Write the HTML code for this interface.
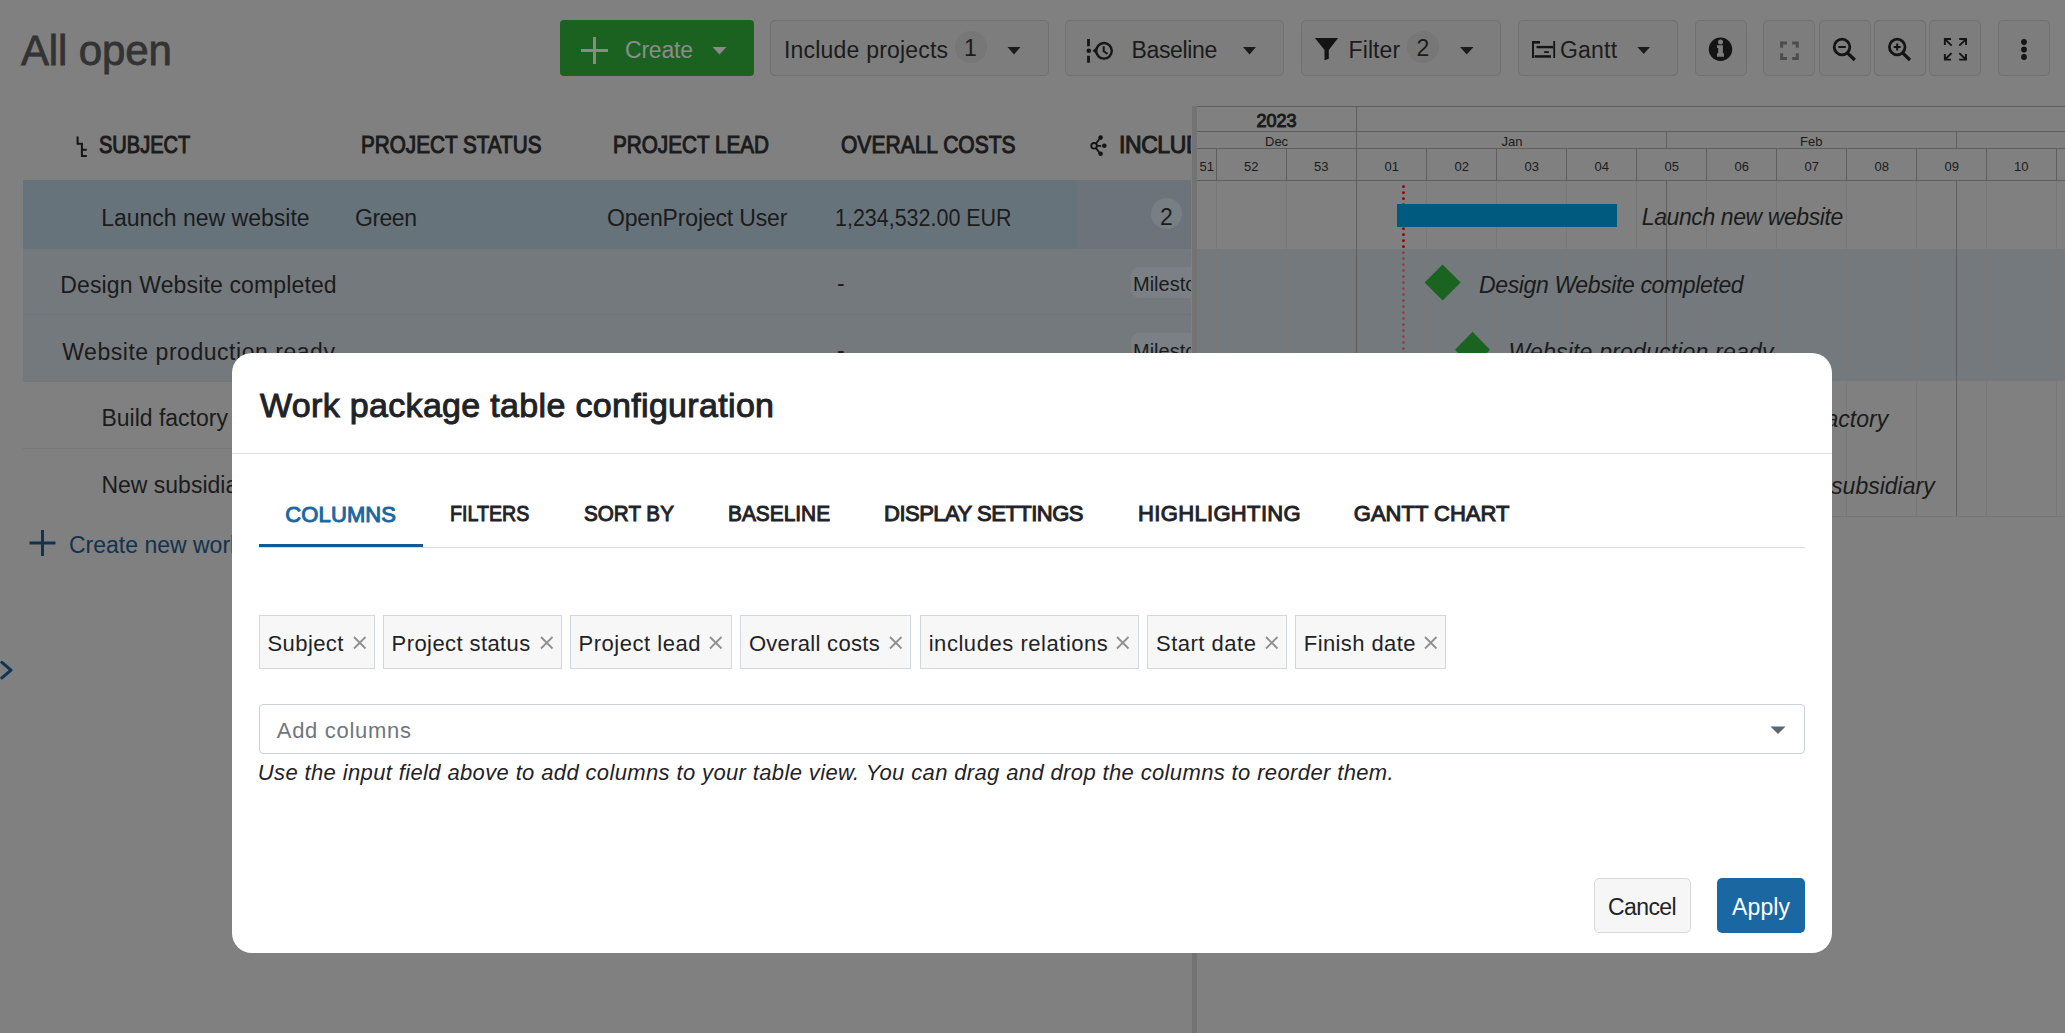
<!DOCTYPE html><html><head><meta charset="utf-8"><style>html,body{margin:0;padding:0}body{width:2065px;height:1033px;position:relative;overflow:hidden;background:#808080;font-family:"Liberation Sans",sans-serif}.t{position:absolute;white-space:nowrap;transform-origin:0 0}</style></head><body>
<div style="position:absolute;left:560px;top:20px;width:194px;height:56px;background:#1b6221;border-radius:4px"></div>
<svg style="position:absolute;left:560px;top:20px" width="194" height="56" viewBox="0 0 194 56"><path d="M34.5 17v27M21 30.5h27" stroke="#8a8a8a" stroke-width="3"/><path d="M152.5 27h14l-7 7.5z" fill="#8a8a8a"/></svg>
<div style="position:absolute;left:770px;top:20px;width:279px;height:56px;background:#7d7d7d;border:1px solid #717171;border-radius:5px;box-sizing:border-box"></div>
<div style="position:absolute;left:955px;top:30.5px;width:32px;height:32px;border-radius:50%;background:#777"></div>
<svg style="position:absolute;left:770px;top:20px" width="279" height="56" viewBox="0 0 279 56"><path d="M237.5 27h13l-6.5 7.5z" fill="#1b1b1b"/></svg>
<div style="position:absolute;left:1065px;top:20px;width:219px;height:56px;background:#7d7d7d;border:1px solid #717171;border-radius:5px;box-sizing:border-box"></div>
<svg style="position:absolute;left:1065px;top:20px" width="219" height="56" viewBox="0 0 219 56"><path d="M23.5 19v7.3M23.5 35.7v7" stroke="#161616" stroke-width="2.8"/><circle cx="23.8" cy="30.8" r="2.3" fill="#161616"/><circle cx="39" cy="30.8" r="7.8" fill="none" stroke="#161616" stroke-width="2.4"/><path d="M27.5 30.8l4.5-4v8z" fill="#161616"/><path d="M38.7 26.3v5l3.8 2.5" fill="none" stroke="#161616" stroke-width="2"/><path d="M178 27h13l-6.5 7.5z" fill="#1b1b1b"/></svg>
<div style="position:absolute;left:1301px;top:20px;width:200px;height:56px;background:#7d7d7d;border:1px solid #717171;border-radius:5px;box-sizing:border-box"></div>
<div style="position:absolute;left:1407px;top:30.5px;width:32px;height:32px;border-radius:50%;background:#777"></div>
<svg style="position:absolute;left:1301px;top:20px" width="200" height="56" viewBox="0 0 200 56"><path d="M13.9 18H37.1L27.8 29.9V38.7L23.5 40.3V29.9Z" fill="#141414"/><path d="M159 27h13.5l-6.75 7.5z" fill="#1b1b1b"/></svg>
<div style="position:absolute;left:1518px;top:20px;width:160px;height:56px;background:#7d7d7d;border:1px solid #717171;border-radius:5px;box-sizing:border-box"></div>
<svg style="position:absolute;left:1518px;top:20px" width="160" height="56" viewBox="0 0 160 56"><g fill="#141414"><rect x="14" y="21" width="2" height="17"/><rect x="16" y="21" width="6" height="2.6"/><rect x="18.5" y="25.9" width="16.5" height="2.4"/><rect x="26.2" y="31.2" width="4.6" height="1.8"/><rect x="16.6" y="35.2" width="16.4" height="2.5"/><rect x="35.3" y="21" width="1.8" height="17"/></g><path d="M119.4 27h12.6l-6.3 7z" fill="#1b1b1b"/></svg>
<div style="position:absolute;left:1695px;top:20px;width:52px;height:56px;background:#7d7d7d;border:1px solid #717171;border-radius:5px;box-sizing:border-box"></div>
<svg style="position:absolute;left:1695px;top:20px" width="52" height="56" viewBox="0 0 52 56"><circle cx="25.5" cy="29.3" r="11.7" fill="#141414"/><circle cx="25.5" cy="22" r="2.5" fill="#7d7d7d"/><path d="M22 25.3H27.9V33.3H29V36.7H22V33.3H23.2V28H22Z" fill="#7d7d7d"/></svg>
<div style="position:absolute;left:1763px;top:20px;width:52px;height:56px;background:#7d7d7d;border:1px solid #717171;border-radius:5px;box-sizing:border-box"></div>
<div style="position:absolute;left:1819px;top:20px;width:52px;height:56px;background:#7d7d7d;border:1px solid #717171;border-radius:5px;box-sizing:border-box"></div>
<div style="position:absolute;left:1874px;top:20px;width:52px;height:56px;background:#7d7d7d;border:1px solid #717171;border-radius:5px;box-sizing:border-box"></div>
<div style="position:absolute;left:1929px;top:20px;width:52px;height:56px;background:#7d7d7d;border:1px solid #717171;border-radius:5px;box-sizing:border-box"></div>
<div style="position:absolute;left:1998px;top:20px;width:52px;height:56px;background:#7d7d7d;border:1px solid #717171;border-radius:5px;box-sizing:border-box"></div>
<svg style="position:absolute;left:1763px;top:20px" width="52" height="56" viewBox="0 0 52 56"><path d="M18.6 27.7V22.9H23.9M29.2 22.9H34.3V27.7M34.3 33.2V38.5H29.2M23.9 38.5H18.6V33.2" fill="none" stroke="#4d4d4d" stroke-width="3"/></svg>
<svg style="position:absolute;left:1819px;top:20px" width="52" height="56" viewBox="0 0 52 56"><circle cx="23" cy="27" r="7.8" fill="none" stroke="#141414" stroke-width="2.8"/><path d="M19.3 27h7.5" stroke="#141414" stroke-width="2"/><path d="M28.5 33l7.3 7" stroke="#141414" stroke-width="3.2"/></svg>
<svg style="position:absolute;left:1874px;top:20px" width="52" height="56" viewBox="0 0 52 56"><circle cx="23.2" cy="27" r="7.8" fill="none" stroke="#141414" stroke-width="2.8"/><path d="M19.7 27h7M23.2 23.5v7" stroke="#141414" stroke-width="2"/><path d="M28.7 33l7.3 7" stroke="#141414" stroke-width="3.2"/></svg>
<svg style="position:absolute;left:1929px;top:20px" width="52" height="56" viewBox="0 0 52 56"><g fill="none" stroke="#141414" stroke-width="1.9"><path d="M15.85 24.9V19.05H22M16.2 19.4l6.4 6.2"/><path d="M30.2 19.05H37.05V24.9M36.7 19.4l-6.4 6.2"/><path d="M15.85 34V39.65H22M16.2 39.3l6.4-6.2"/><path d="M30.2 39.65H37.05V34M36.7 39.3l-6.4-6.2"/></g></svg>
<svg style="position:absolute;left:1998px;top:20px" width="52" height="56" viewBox="0 0 52 56"><g fill="#141414"><circle cx="26" cy="22" r="2.9"/><circle cx="26" cy="29.5" r="2.9"/><circle cx="26" cy="37" r="2.9"/></g></svg>
<svg style="position:absolute;left:70px;top:130px" width="25" height="32" viewBox="0 0 25 32"><path d="M7.6 6.5v7.3h4.3V26h4.9M11.9 19.8h4.9" fill="none" stroke="#141414" stroke-width="2"/></svg>
<svg style="position:absolute;left:1085px;top:130px" width="30" height="32" viewBox="0 0 30 32"><circle cx="9.1" cy="15.8" r="2.8" fill="none" stroke="#141414" stroke-width="1.9"/><path d="M11 13.5l3.3-4.4M12 15.8h4.2M11 18.1l3.3 4.4" stroke="#141414" stroke-width="1.8"/><g fill="#141414"><circle cx="15.6" cy="7.6" r="2.3"/><circle cx="19.3" cy="15.8" r="2.3"/><circle cx="15.6" cy="23.8" r="2.3"/></g></svg>
<div style="position:absolute;left:23px;top:180px;width:1054px;height:69px;background:#67737b"></div>
<div style="position:absolute;left:1077px;top:180px;width:114px;height:69px;background:#6d737b"></div>
<div style="position:absolute;left:23px;top:249px;width:1168px;height:132px;background:#74797d"></div>
<div style="position:absolute;left:23px;top:314px;width:1168px;height:1px;background:#6e757a"></div>
<div style="position:absolute;left:23px;top:381px;width:1168px;height:1px;background:#767676"></div>
<div style="position:absolute;left:23px;top:448px;width:1168px;height:1px;background:#777"></div>
<div style="position:absolute;left:1150.5px;top:197.5px;width:31.5px;height:31.5px;border-radius:50%;background:#787f84"></div>
<div style="position:absolute;left:1131px;top:266.5px;width:60px;height:31px;overflow:hidden"><div style="width:120px;height:31px;border-radius:8px;background:#7a8085"></div></div>
<div style="position:absolute;left:1131px;top:333px;width:60px;height:31px;overflow:hidden"><div style="width:120px;height:31px;border-radius:8px;background:#7a8085"></div></div>
<svg style="position:absolute;left:26px;top:527px" width="34" height="34" viewBox="0 0 34 34"><path d="M16.5 3v26M3.5 16h26" stroke="#12324d" stroke-width="3"/></svg>
<svg style="position:absolute;left:0px;top:655px" width="16" height="30" viewBox="0 0 16 30"><path d="M1.9 7.4L11 15.1L1.9 22.9" fill="none" stroke="#0f3456" stroke-width="3.1" stroke-linecap="round" stroke-linejoin="round"/></svg>
<div style="position:absolute;left:1192px;top:106px;width:5px;height:927px;background:#737373"></div>
<svg style="position:absolute;left:1197px;top:106px" width="868" height="420" viewBox="0 0 868 420"><rect x="0" y="0" width="868" height="1" fill="#5f5f5f"/><rect x="0" y="25" width="868" height="1" fill="#5f5f5f"/><rect x="0" y="42" width="868" height="1" fill="#5f5f5f"/><rect x="0" y="74" width="868" height="1" fill="#5f5f5f"/><rect x="0" y="410" width="868" height="1" fill="#777"/><rect x="0" y="143" width="868" height="132" fill="#74797d"/><rect x="19" y="42" width="1" height="32" fill="#5f5f5f"/><rect x="19" y="75" width="1" height="335" fill="#787878"/><rect x="89" y="42" width="1" height="32" fill="#5f5f5f"/><rect x="89" y="75" width="1" height="335" fill="#787878"/><rect x="229" y="42" width="1" height="32" fill="#5f5f5f"/><rect x="229" y="75" width="1" height="335" fill="#787878"/><rect x="299" y="42" width="1" height="32" fill="#5f5f5f"/><rect x="299" y="75" width="1" height="335" fill="#787878"/><rect x="369" y="42" width="1" height="32" fill="#5f5f5f"/><rect x="369" y="75" width="1" height="335" fill="#787878"/><rect x="439" y="42" width="1" height="32" fill="#5f5f5f"/><rect x="439" y="75" width="1" height="335" fill="#787878"/><rect x="509" y="42" width="1" height="32" fill="#5f5f5f"/><rect x="509" y="75" width="1" height="335" fill="#787878"/><rect x="579" y="42" width="1" height="32" fill="#5f5f5f"/><rect x="579" y="75" width="1" height="335" fill="#787878"/><rect x="649" y="42" width="1" height="32" fill="#5f5f5f"/><rect x="649" y="75" width="1" height="335" fill="#787878"/><rect x="719" y="42" width="1" height="32" fill="#5f5f5f"/><rect x="719" y="75" width="1" height="335" fill="#787878"/><rect x="789" y="42" width="1" height="32" fill="#5f5f5f"/><rect x="789" y="75" width="1" height="335" fill="#787878"/><rect x="859" y="42" width="1" height="32" fill="#5f5f5f"/><rect x="859" y="75" width="1" height="335" fill="#787878"/><rect x="159" y="0" width="1" height="411" fill="#5f5f5f"/><rect x="469" y="25" width="1" height="17" fill="#5f5f5f"/><rect x="469" y="75" width="1" height="335" fill="#5f5f5f"/><rect x="759" y="25" width="1" height="17" fill="#5f5f5f"/><rect x="759" y="75" width="1" height="335" fill="#5f5f5f"/><circle cx="206.5" cy="80.7" r="1.4" fill="#900000"/><circle cx="206.5" cy="86.7" r="1.4" fill="#900000"/><circle cx="206.5" cy="92.7" r="1.4" fill="#900000"/><circle cx="206.5" cy="98.7" r="1.4" fill="#900000"/><circle cx="206.5" cy="104.7" r="1.4" fill="#900000"/><circle cx="206.5" cy="110.7" r="1.4" fill="#900000"/><circle cx="206.5" cy="116.7" r="1.4" fill="#900000"/><circle cx="206.5" cy="122.7" r="1.4" fill="#900000"/><circle cx="206.5" cy="128.7" r="1.4" fill="#900000"/><circle cx="206.5" cy="134.7" r="1.4" fill="#900000"/><circle cx="206.5" cy="140.7" r="1.4" fill="#900000"/><circle cx="206.5" cy="146.7" r="1.4" fill="#8a4448"/><circle cx="206.5" cy="152.7" r="1.4" fill="#8a4448"/><circle cx="206.5" cy="158.7" r="1.4" fill="#8a4448"/><circle cx="206.5" cy="164.7" r="1.4" fill="#8a4448"/><circle cx="206.5" cy="170.7" r="1.4" fill="#8a4448"/><circle cx="206.5" cy="176.7" r="1.4" fill="#8a4448"/><circle cx="206.5" cy="182.7" r="1.4" fill="#8a4448"/><circle cx="206.5" cy="188.7" r="1.4" fill="#8a4448"/><circle cx="206.5" cy="194.7" r="1.4" fill="#8a4448"/><circle cx="206.5" cy="200.7" r="1.4" fill="#8a4448"/><circle cx="206.5" cy="206.7" r="1.4" fill="#8a4448"/><circle cx="206.5" cy="212.7" r="1.4" fill="#8a4448"/><circle cx="206.5" cy="218.7" r="1.4" fill="#8a4448"/><circle cx="206.5" cy="224.7" r="1.4" fill="#8a4448"/><circle cx="206.5" cy="230.7" r="1.4" fill="#8a4448"/><circle cx="206.5" cy="236.7" r="1.4" fill="#8a4448"/><circle cx="206.5" cy="242.7" r="1.4" fill="#8a4448"/><circle cx="206.5" cy="248.7" r="1.4" fill="#8a4448"/><rect x="200" y="98" width="220" height="23" fill="#005a80"/><path d="M245.5999999999999 158.5l18 18-18 18-18-18z" fill="#1b6320"/><path d="M275.5 225.7l17.5 18-17.5 18-17.5-18z" fill="#1b6320"/></svg>
<div class="t" style="left:21.00px;top:29.70px;font:normal 400 42px/42px 'Liberation Sans', sans-serif;-webkit-text-stroke:0.8px #333333;letter-spacing:-0.143px;color:#333333">All open</div>
<div class="t" style="left:625.00px;top:39.20px;font:normal 400 23px/23px 'Liberation Sans', sans-serif;letter-spacing:-0.200px;color:#8c8c8c">Create</div>
<div class="t" style="left:784.00px;top:38.70px;font:normal 400 23px/23px 'Liberation Sans', sans-serif;letter-spacing:0.200px;color:#1b1b1b">Include projects</div>
<div class="t" style="left:964.00px;top:37.00px;font:normal 400 23px/23px 'Liberation Sans', sans-serif;letter-spacing:0.000px;color:#1b1b1b">1</div>
<div class="t" style="left:1131.50px;top:38.70px;font:normal 400 23px/23px 'Liberation Sans', sans-serif;letter-spacing:-0.357px;color:#1b1b1b">Baseline</div>
<div class="t" style="left:1348.60px;top:38.70px;font:normal 400 23px/23px 'Liberation Sans', sans-serif;letter-spacing:0.080px;color:#1b1b1b">Filter</div>
<div class="t" style="left:1416.50px;top:37.20px;font:normal 400 23px/23px 'Liberation Sans', sans-serif;letter-spacing:0.000px;color:#1b1b1b">2</div>
<div class="t" style="left:1560.00px;top:38.70px;font:normal 400 23px/23px 'Liberation Sans', sans-serif;letter-spacing:0.200px;color:#1b1b1b">Gantt</div>
<div class="t" style="left:99.43px;top:133.90px;font:normal 400 23px/23px 'Liberation Sans', sans-serif;-webkit-text-stroke:1.0px #1b1b1b;letter-spacing:0.000px;color:#1b1b1b;transform:scaleX(0.8702)">SUBJECT</div>
<div class="t" style="left:361.10px;top:133.90px;font:normal 400 23px/23px 'Liberation Sans', sans-serif;-webkit-text-stroke:1.0px #1b1b1b;letter-spacing:0.000px;color:#1b1b1b;transform:scaleX(0.8995)">PROJECT STATUS</div>
<div class="t" style="left:613.30px;top:133.90px;font:normal 400 23px/23px 'Liberation Sans', sans-serif;-webkit-text-stroke:1.0px #1b1b1b;letter-spacing:0.000px;color:#1b1b1b;transform:scaleX(0.9000)">PROJECT LEAD</div>
<div class="t" style="left:840.99px;top:133.90px;font:normal 400 23px/23px 'Liberation Sans', sans-serif;-webkit-text-stroke:1.0px #1b1b1b;letter-spacing:0.000px;color:#1b1b1b;transform:scaleX(0.9148)">OVERALL COSTS</div>
<div class="t" style="left:1119.00px;top:133.90px;width:72.00px;overflow:hidden;font:normal 400 23px/23px 'Liberation Sans', sans-serif;-webkit-text-stroke:1.0px #1b1b1b;letter-spacing:-0.412px;color:#1b1b1b">INCLUDES RELATIONS</div>
<div class="t" style="left:101.20px;top:207.00px;font:normal 400 23px/23px 'Liberation Sans', sans-serif;letter-spacing:0.000px;color:#1b1b1b">Launch new website</div>
<div class="t" style="left:355.00px;top:207.00px;font:normal 400 23px/23px 'Liberation Sans', sans-serif;letter-spacing:-0.500px;color:#1b1b1b">Green</div>
<div class="t" style="left:607.00px;top:207.00px;font:normal 400 23px/23px 'Liberation Sans', sans-serif;letter-spacing:-0.160px;color:#1b1b1b">OpenProject User</div>
<div class="t" style="left:835.13px;top:207.00px;font:normal 400 23px/23px 'Liberation Sans', sans-serif;letter-spacing:0.000px;color:#1b1b1b;transform:scaleX(0.9333)">1,234,532.00 EUR</div>
<div class="t" style="left:1160.00px;top:206.00px;font:normal 400 23px/23px 'Liberation Sans', sans-serif;letter-spacing:0.000px;color:#1b1b1b">2</div>
<div class="t" style="left:60.30px;top:273.70px;font:normal 400 23px/23px 'Liberation Sans', sans-serif;letter-spacing:0.139px;color:#1b1b1b">Design Website completed</div>
<div class="t" style="left:837.00px;top:271.70px;font:normal 400 23px/23px 'Liberation Sans', sans-serif;letter-spacing:0.000px;color:#1b1b1b">-</div>
<div class="t" style="left:1133.00px;top:273.50px;width:58.00px;overflow:hidden;font:normal 400 20px/20px 'Liberation Sans', sans-serif;letter-spacing:0.000px;color:#1b1b1b">Milestone</div>
<div class="t" style="left:62.30px;top:340.50px;font:normal 400 23px/23px 'Liberation Sans', sans-serif;letter-spacing:0.530px;color:#1b1b1b">Website production ready</div>
<div class="t" style="left:837.00px;top:338.50px;font:normal 400 23px/23px 'Liberation Sans', sans-serif;letter-spacing:0.000px;color:#1b1b1b">-</div>
<div class="t" style="left:1133.00px;top:340.50px;width:58.00px;overflow:hidden;font:normal 400 20px/20px 'Liberation Sans', sans-serif;letter-spacing:0.000px;color:#1b1b1b">Milestone</div>
<div class="t" style="left:101.40px;top:407.20px;font:normal 400 23px/23px 'Liberation Sans', sans-serif;letter-spacing:0.000px;color:#1b1b1b">Build factory</div>
<div class="t" style="left:101.40px;top:474.00px;font:normal 400 23px/23px 'Liberation Sans', sans-serif;letter-spacing:0.000px;color:#1b1b1b">New subsidiary</div>
<div class="t" style="left:69.00px;top:534.00px;font:normal 400 23px/23px 'Liberation Sans', sans-serif;letter-spacing:0.000px;color:#12324d">Create new work package</div>
<div class="t" style="left:1256.50px;top:112.00px;font:normal 400 18px/18px 'Liberation Sans', sans-serif;-webkit-text-stroke:1.0px #1b1b1b;letter-spacing:0.000px;color:#1b1b1b">2023</div>
<div class="t" style="left:1265.00px;top:135.00px;font:normal 400 13px/13px 'Liberation Sans', sans-serif;letter-spacing:0.000px;color:#1b1b1b">Dec</div>
<div class="t" style="left:1501.50px;top:135.00px;font:normal 400 13px/13px 'Liberation Sans', sans-serif;letter-spacing:0.000px;color:#1b1b1b">Jan</div>
<div class="t" style="left:1800.00px;top:135.00px;font:normal 400 13px/13px 'Liberation Sans', sans-serif;letter-spacing:0.000px;color:#1b1b1b">Feb</div>
<div class="t" style="left:1199.50px;top:160.20px;font:normal 400 13px/13px 'Liberation Sans', sans-serif;letter-spacing:0.000px;color:#1b1b1b">51</div>
<div class="t" style="left:1244.00px;top:160.20px;font:normal 400 13px/13px 'Liberation Sans', sans-serif;letter-spacing:0.000px;color:#1b1b1b">52</div>
<div class="t" style="left:1314.00px;top:160.20px;font:normal 400 13px/13px 'Liberation Sans', sans-serif;letter-spacing:0.000px;color:#1b1b1b">53</div>
<div class="t" style="left:1384.50px;top:160.20px;font:normal 400 13px/13px 'Liberation Sans', sans-serif;letter-spacing:0.000px;color:#1b1b1b">01</div>
<div class="t" style="left:1454.50px;top:160.20px;font:normal 400 13px/13px 'Liberation Sans', sans-serif;letter-spacing:0.000px;color:#1b1b1b">02</div>
<div class="t" style="left:1524.50px;top:160.20px;font:normal 400 13px/13px 'Liberation Sans', sans-serif;letter-spacing:0.000px;color:#1b1b1b">03</div>
<div class="t" style="left:1594.50px;top:160.20px;font:normal 400 13px/13px 'Liberation Sans', sans-serif;letter-spacing:0.000px;color:#1b1b1b">04</div>
<div class="t" style="left:1664.50px;top:160.20px;font:normal 400 13px/13px 'Liberation Sans', sans-serif;letter-spacing:0.000px;color:#1b1b1b">05</div>
<div class="t" style="left:1734.50px;top:160.20px;font:normal 400 13px/13px 'Liberation Sans', sans-serif;letter-spacing:0.000px;color:#1b1b1b">06</div>
<div class="t" style="left:1804.50px;top:160.20px;font:normal 400 13px/13px 'Liberation Sans', sans-serif;letter-spacing:0.000px;color:#1b1b1b">07</div>
<div class="t" style="left:1874.50px;top:160.20px;font:normal 400 13px/13px 'Liberation Sans', sans-serif;letter-spacing:0.000px;color:#1b1b1b">08</div>
<div class="t" style="left:1944.50px;top:160.20px;font:normal 400 13px/13px 'Liberation Sans', sans-serif;letter-spacing:0.000px;color:#1b1b1b">09</div>
<div class="t" style="left:2014.00px;top:160.20px;font:normal 400 13px/13px 'Liberation Sans', sans-serif;letter-spacing:0.000px;color:#1b1b1b">10</div>
<div class="t" style="left:1641.80px;top:206.00px;font:italic 400 23px/23px 'Liberation Sans', sans-serif;letter-spacing:-0.412px;color:#1b1b1b">Launch new website</div>
<div class="t" style="left:1479.00px;top:273.60px;font:italic 400 23px/23px 'Liberation Sans', sans-serif;letter-spacing:-0.370px;color:#1b1b1b">Design Website completed</div>
<div class="t" style="left:1508.50px;top:340.50px;font:italic 400 23px/23px 'Liberation Sans', sans-serif;letter-spacing:0.196px;color:#1b1b1b">Website production ready</div>
<div class="t" style="left:1761.60px;top:407.70px;font:italic 400 23px/23px 'Liberation Sans', sans-serif;letter-spacing:0.000px;color:#1b1b1b">Build factory</div>
<div class="t" style="left:1778.70px;top:474.70px;font:italic 400 23px/23px 'Liberation Sans', sans-serif;letter-spacing:0.000px;color:#1b1b1b">New subsidiary</div>
<div style="position:absolute;left:232px;top:353px;width:1600px;height:600px;background:#fff;border-radius:20px"></div>
<div style="position:absolute;left:232px;top:453px;width:1600px;height:1px;background:#dfe3e7"></div>
<div style="position:absolute;left:259px;top:547px;width:1546px;height:1px;background:#d5dce3"></div>
<div style="position:absolute;left:259px;top:544px;width:164px;height:3px;background:#135a96"></div>
<div style="position:absolute;left:259px;top:615px;width:116px;height:54px;box-sizing:border-box;background:#f7f7f7;border:1px solid #d0d7de"></div>
<svg style="position:absolute;left:352.5px;top:636px" width="14" height="14" viewBox="0 0 14 14"><path d="M1 1l11.5 11.5M12.5 1L1 12.5" stroke="#8f8f8f" stroke-width="1.8"/></svg>
<div style="position:absolute;left:383px;top:615px;width:179px;height:54px;box-sizing:border-box;background:#f7f7f7;border:1px solid #d0d7de"></div>
<svg style="position:absolute;left:539.5px;top:636px" width="14" height="14" viewBox="0 0 14 14"><path d="M1 1l11.5 11.5M12.5 1L1 12.5" stroke="#8f8f8f" stroke-width="1.8"/></svg>
<div style="position:absolute;left:570px;top:615px;width:162px;height:54px;box-sizing:border-box;background:#f7f7f7;border:1px solid #d0d7de"></div>
<svg style="position:absolute;left:708.7px;top:636px" width="14" height="14" viewBox="0 0 14 14"><path d="M1 1l11.5 11.5M12.5 1L1 12.5" stroke="#8f8f8f" stroke-width="1.8"/></svg>
<div style="position:absolute;left:740px;top:615px;width:171px;height:54px;box-sizing:border-box;background:#f7f7f7;border:1px solid #d0d7de"></div>
<svg style="position:absolute;left:888.6px;top:636px" width="14" height="14" viewBox="0 0 14 14"><path d="M1 1l11.5 11.5M12.5 1L1 12.5" stroke="#8f8f8f" stroke-width="1.8"/></svg>
<div style="position:absolute;left:920px;top:615px;width:219px;height:54px;box-sizing:border-box;background:#f7f7f7;border:1px solid #d0d7de"></div>
<svg style="position:absolute;left:1115.8px;top:636px" width="14" height="14" viewBox="0 0 14 14"><path d="M1 1l11.5 11.5M12.5 1L1 12.5" stroke="#8f8f8f" stroke-width="1.8"/></svg>
<div style="position:absolute;left:1147px;top:615px;width:140px;height:54px;box-sizing:border-box;background:#f7f7f7;border:1px solid #d0d7de"></div>
<svg style="position:absolute;left:1264.7px;top:636px" width="14" height="14" viewBox="0 0 14 14"><path d="M1 1l11.5 11.5M12.5 1L1 12.5" stroke="#8f8f8f" stroke-width="1.8"/></svg>
<div style="position:absolute;left:1295px;top:615px;width:151px;height:54px;box-sizing:border-box;background:#f7f7f7;border:1px solid #d0d7de"></div>
<svg style="position:absolute;left:1424.0px;top:636px" width="14" height="14" viewBox="0 0 14 14"><path d="M1 1l11.5 11.5M12.5 1L1 12.5" stroke="#8f8f8f" stroke-width="1.8"/></svg>
<div style="position:absolute;left:259px;top:704px;width:1546px;height:50px;box-sizing:border-box;border:1px solid #c9d1d9;border-radius:4px;background:#fff"></div>
<svg style="position:absolute;left:1769px;top:724px" width="18" height="12" viewBox="0 0 18 12"><path d="M1.5 2.5h15l-7.5 7.5z" fill="#5c6670"/></svg>
<div style="position:absolute;left:1594px;top:878px;width:97px;height:55px;box-sizing:border-box;background:#f6f6f6;border:1px solid #d8d8d8;border-radius:5px"></div>
<div style="position:absolute;left:1717px;top:878px;width:88px;height:55px;background:#1b67a2;border-radius:5px"></div>
<div class="t" style="left:260.00px;top:387.60px;font:normal 400 34px/34px 'Liberation Sans', sans-serif;-webkit-text-stroke:1.0px #1f2328;letter-spacing:0.323px;color:#1f2328">Work package table configuration</div>
<div class="t" style="left:285.30px;top:503.80px;font:normal 400 22px/22px 'Liberation Sans', sans-serif;-webkit-text-stroke:1.0px #1a67a3;letter-spacing:0.117px;color:#1a67a3">COLUMNS</div>
<div class="t" style="left:450.11px;top:502.80px;font:normal 400 22px/22px 'Liberation Sans', sans-serif;-webkit-text-stroke:1.0px #1f2328;letter-spacing:0.000px;color:#1f2328;transform:scaleX(0.8920)">FILTERS</div>
<div class="t" style="left:583.56px;top:502.80px;font:normal 400 22px/22px 'Liberation Sans', sans-serif;-webkit-text-stroke:1.0px #1f2328;letter-spacing:0.000px;color:#1f2328;transform:scaleX(0.9389)">SORT BY</div>
<div class="t" style="left:728.05px;top:502.80px;font:normal 400 22px/22px 'Liberation Sans', sans-serif;-webkit-text-stroke:1.0px #1f2328;letter-spacing:0.000px;color:#1f2328;transform:scaleX(0.9491)">BASELINE</div>
<div class="t" style="left:884.00px;top:502.80px;font:normal 400 22px/22px 'Liberation Sans', sans-serif;-webkit-text-stroke:1.0px #1f2328;letter-spacing:-0.500px;color:#1f2328">DISPLAY SETTINGS</div>
<div class="t" style="left:1138.00px;top:502.80px;font:normal 400 22px/22px 'Liberation Sans', sans-serif;-webkit-text-stroke:1.0px #1f2328;letter-spacing:0.345px;color:#1f2328">HIGHLIGHTING</div>
<div class="t" style="left:1353.80px;top:502.80px;font:normal 400 22px/22px 'Liberation Sans', sans-serif;-webkit-text-stroke:1.0px #1f2328;letter-spacing:0.000px;color:#1f2328">GANTT CHART</div>
<div class="t" style="left:267.50px;top:633.00px;font:normal 400 22px/22px 'Liberation Sans', sans-serif;letter-spacing:0.417px;color:#1f2328">Subject</div>
<div class="t" style="left:391.60px;top:633.00px;font:normal 400 22px/22px 'Liberation Sans', sans-serif;letter-spacing:0.415px;color:#1f2328">Project status</div>
<div class="t" style="left:578.60px;top:633.00px;font:normal 400 22px/22px 'Liberation Sans', sans-serif;letter-spacing:0.509px;color:#1f2328">Project lead</div>
<div class="t" style="left:748.90px;top:633.00px;font:normal 400 22px/22px 'Liberation Sans', sans-serif;letter-spacing:0.300px;color:#1f2328">Overall costs</div>
<div class="t" style="left:928.70px;top:633.00px;font:normal 400 22px/22px 'Liberation Sans', sans-serif;letter-spacing:0.541px;color:#1f2328">includes relations</div>
<div class="t" style="left:1156.00px;top:633.00px;font:normal 400 22px/22px 'Liberation Sans', sans-serif;letter-spacing:0.500px;color:#1f2328">Start date</div>
<div class="t" style="left:1303.80px;top:633.00px;font:normal 400 22px/22px 'Liberation Sans', sans-serif;letter-spacing:0.400px;color:#1f2328">Finish date</div>
<div class="t" style="left:276.80px;top:719.50px;font:normal 400 22px/22px 'Liberation Sans', sans-serif;letter-spacing:0.700px;color:#6e7781">Add columns</div>
<div class="t" style="left:257.80px;top:762.00px;font:italic 400 22px/22px 'Liberation Sans', sans-serif;letter-spacing:0.368px;color:#1f2328">Use the input field above to add columns to your table view. You can drag and drop the columns to reorder them.</div>
<div class="t" style="left:1608.00px;top:896.00px;font:normal 400 23px/23px 'Liberation Sans', sans-serif;letter-spacing:-0.600px;color:#1f2328">Cancel</div>
<div class="t" style="left:1732.10px;top:896.00px;font:normal 400 23px/23px 'Liberation Sans', sans-serif;letter-spacing:0.100px;color:#ffffff">Apply</div>
</body></html>
